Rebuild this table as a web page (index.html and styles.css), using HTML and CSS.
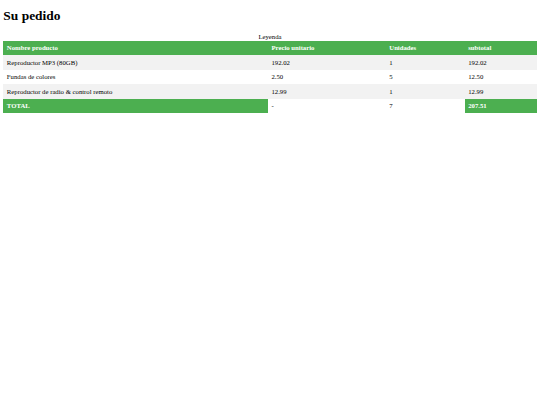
FILE: index.html
```html
<!DOCTYPE html>
<html lang="es">
<head>
<meta charset="utf-8">
<title>Su pedido</title>
<link rel="stylesheet" href="styles.css">
</head>
<body>
<h1 class="title">Su pedido</h1>
<table class="order">
  <caption class="legend">Leyenda</caption>
  <thead>
    <tr class="head-row">
      <th class="c-name">Nombre producto</th>
      <th class="c-price">Precio unitario</th>
      <th class="c-units">Unidades</th>
      <th class="c-sub">subtotal</th>
    </tr>
  </thead>
  <tbody>
    <tr class="odd"><td>Reproductor MP3 (80GB)</td><td>192.02</td><td>1</td><td>192.02</td></tr>
    <tr class="even"><td>Fundas de colores</td><td>2.50</td><td>5</td><td>12.50</td></tr>
    <tr class="odd"><td>Reproductor de radio &amp; control remoto</td><td>12.99</td><td>1</td><td>12.99</td></tr>
  </tbody>
  <tfoot>
    <tr class="foot-row">
      <th class="hl">TOTAL</th>
      <td>-</td>
      <td>7</td>
      <th class="hl">207.51</th>
    </tr>
  </tfoot>
</table>
</body>
</html>
```

FILE: styles.css
```css
body {
  margin: 3.36px;
  font-family: "Liberation Serif", "Times New Roman", serif;
  color: #000;
  background: #fff;
}
.title {
  font-size: 13.44px;
  font-weight: bold;
  margin: 5px 0 9px;
}
.order {
  width: 100%;
  border-collapse: collapse;
  font-size: 6.72px;
}
.legend {
  font-size: 6.72px;
  line-height: 7.7px;
  text-align: center;
}
.order th,
.order td {
  text-align: left;
  padding: 3.36px 3.5px;
  line-height: 7.7px;
}
.head-row th {
  background: #4caf50;
  color: #fff;
  font-weight: bold;
}
.c-name { width: 258px; }
.c-price { width: 111px; }
.c-units { width: 72px; }
.c-sub { width: 65px; }
.odd { background: #f2f2f2; }
.even { background: #fff; }
.foot-row th.hl {
  background: #4caf50;
  color: #fff;
  font-weight: bold;
}
```
